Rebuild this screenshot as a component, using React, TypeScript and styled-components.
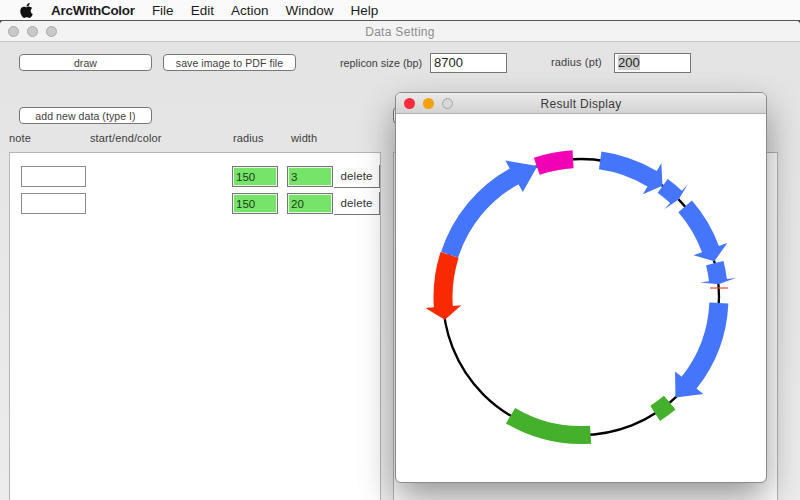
import styled, { createGlobalStyle } from 'styled-components';
import { FaApple } from 'react-icons/fa';

const GlobalStyle = createGlobalStyle`
  html, body {
    margin: 0;
    padding: 0;
    background: #e8e8e8;
  }
  * {
    box-sizing: border-box;
  }
`;

const FONT = '"Liberation Sans", Arial, sans-serif';
const CX = 185;
const CY = 183;
const R = 138;

type Feature = {
  color: string;
  from: number;
  to: number;
  width: number;
  head?: { base: number; half: number };
};

const features: Feature[] = [
  { color: '#4575fb', from: -72.2, to: -18.4, width: 18, head: { base: -29, half: 18 } },
  { color: '#f92a02', from: -72.2, to: -99.5, width: 19, head: { base: -94, half: 18 } },
  { color: '#f200b4', from: -18.7, to: -3.3, width: 18 },
  { color: '#4575fb', from: 8, to: 36.2, width: 18, head: { base: 31, half: 18 } },
  { color: '#4575fb', from: 36.3, to: 45, width: 17, head: { base: 43.5, half: 17 } },
  { color: '#4575fb', from: 49, to: 75, width: 18, head: { base: 69.7, half: 18 } },
  { color: '#4575fb', from: 75.8, to: 84.7, width: 18, head: { base: 83, half: 18 } },
  { color: '#4575fb', from: 92.5, to: 136.8, width: 19, head: { base: 128.4, half: 18 } },
  { color: '#44b02c', from: 140, to: 147.5, width: 18 },
  { color: '#44b02c', from: 176, to: 210.7, width: 18 },
];

function polar(radius: number, deg: number) {
  const a = (deg * Math.PI) / 180;
  return `${(CX + radius * Math.sin(a)).toFixed(2)} ${(CY - radius * Math.cos(a)).toFixed(2)}`;
}

function featurePath({ from, to, width, head }: Feature) {
  const outer = R + width / 2;
  const inner = R - width / 2;
  const end = head ? head.base : to;
  const sweep = end > from ? 1 : 0;
  const parts = [`M ${polar(outer, from)}`, `A ${outer} ${outer} 0 0 ${sweep} ${polar(outer, end)}`];
  if (head) {
    parts.push(`L ${polar(R + head.half, end)}`, `L ${polar(R, to)}`, `L ${polar(R - head.half, end)}`);
  }
  parts.push(`L ${polar(inner, end)}`, `A ${inner} ${inner} 0 0 ${sweep ? 0 : 1} ${polar(inner, from)}`, 'Z');
  return parts.join(' ');
}

export default function App() {
  return (
    <Desktop>
      <GlobalStyle />
      <MenuBar>
        <AppleMark>
          <FaApple size={17} />
        </AppleMark>
        <MenuItem $bold>ArcWithColor</MenuItem>
        <MenuItem>File</MenuItem>
        <MenuItem>Edit</MenuItem>
        <MenuItem>Action</MenuItem>
        <MenuItem>Window</MenuItem>
        <MenuItem>Help</MenuItem>
      </MenuBar>

      <DataWindow>
        <TitleBar>
          <Lights>
            <Light $color="#c9c9c9" />
            <Light $color="#c9c9c9" />
            <Light $color="#c9c9c9" />
          </Lights>
          <Title>Data Setting</Title>
        </TitleBar>

        <Toolbar>
          <PushButton>draw</PushButton>
          <PushButton>save image to PDF file</PushButton>
          <SizeLabel>replicon size (bp)</SizeLabel>
          <ValueField>8700</ValueField>
          <RadiusLabel>radius (pt)</RadiusLabel>
          <ValueField>
            <Selected>200</Selected>
          </ValueField>
        </Toolbar>

        <AddRow>
          <PushButton>add new data (type I)</PushButton>
          <HiddenButton />
        </AddRow>

        <Headers>
          <NoteHead>note</NoteHead>
          <RangeHead>start/end/color</RangeHead>
          <RadiusHead>radius</RadiusHead>
          <span>width</span>
        </Headers>

        <Panels>
          <ListPanel>
            <DataRow>
              <NoteField />
              <GreenField>150</GreenField>
              <GreenField>3</GreenField>
              <DeleteButton>delete</DeleteButton>
            </DataRow>
            <DataRow>
              <NoteField />
              <GreenField>150</GreenField>
              <GreenField>20</GreenField>
              <DeleteButton>delete</DeleteButton>
            </DataRow>
          </ListPanel>
          <SecondPanel />
        </Panels>
      </DataWindow>

      <ResultWindow>
        <ResultBar>
          <Lights>
            <ResultLight $color="#fa2b3c" />
            <ResultLight $color="#f5a10f" />
            <ResultLight $color="#d8d8d8" $ring />
          </Lights>
          <ResultTitle>Result Display</ResultTitle>
        </ResultBar>
        <ResultBody>
          <svg width="370" height="368" viewBox="0 0 370 368">
            <circle cx={CX} cy={CY} r={R} fill="none" stroke="#000" strokeWidth="2.3" />
            {features.map((f, i) => (
              <path key={i} d={featurePath(f)} fill={f.color} />
            ))}
            <line x1={CX + R - 9} y1="174" x2={CX + R + 9} y2="174" stroke="#e5492f" strokeWidth="1.2" />
          </svg>
        </ResultBody>
      </ResultWindow>
    </Desktop>
  );
}

const Desktop = styled.div`
  position: relative;
  width: 800px;
  height: 500px;
  overflow: hidden;
  display: flex;
  flex-direction: column;
  font-family: ${FONT};
  background: #444;
`;

const MenuBar = styled.div`
  height: 21px;
  flex: none;
  display: flex;
  align-items: center;
  padding-left: 18px;
  background: #fafafa;
  border-bottom: 1px solid #555;
  font-size: 13.5px;
  color: #1c1c1c;
`;

const AppleMark = styled.span`
  width: 33px;
  display: flex;
  color: #111;
`;

const MenuItem = styled.span<{ $bold?: boolean }>`
  margin-right: 17px;
  font-weight: ${(p) => (p.$bold ? 700 : 400)};
  letter-spacing: ${(p) => (p.$bold ? '-0.25px' : '0')};
`;

const DataWindow = styled.div`
  flex: 1;
  display: flex;
  flex-direction: column;
  min-height: 0;
  border-radius: 4px 4px 0 0;
  background: linear-gradient(#e3e3e3, #ececec);
  font-size: 11px;
  letter-spacing: 0.12px;
  color: #3d3d3d;
`;

const TitleBar = styled.div`
  height: 21px;
  flex: none;
  display: flex;
  align-items: center;
  justify-content: center;
  position: relative;
  padding-top: 1px;
  border-radius: 4px 4px 0 0;
  background: #f3f3f3;
  border-bottom: 1px solid #c6c6c6;
`;

const Lights = styled.div`
  position: absolute;
  left: 8px;
  top: 5px;
  display: flex;
  gap: 8px;
`;

const Light = styled.i<{ $color: string }>`
  width: 11px;
  height: 11px;
  border-radius: 50%;
  background: ${(p) => p.$color};
  border: 1px solid #a9a9a9;
`;

const Title = styled.span`
  font-size: 12px;
  letter-spacing: 0.3px;
  color: #8d8d8d;
`;

const Toolbar = styled.div`
  height: 33px;
  margin-top: 4px;
  flex: none;
  display: flex;
  align-items: center;
  padding-left: 19px;
`;

const PushButton = styled.button`
  width: 133px;
  height: 17px;
  margin-right: 11px;
  padding: 0;
  flex: none;
  background: #fff;
  border: 1px solid #777;
  border-radius: 4px;
  font: inherit;
  font-size: 10.5px;
  letter-spacing: 0.08px;
  color: #3d3d3d;
`;

const SizeLabel = styled.span`
  margin-left: 33px;
  width: 90px;
  flex: none;
  font-size: 10.8px;
  letter-spacing: 0;
  white-space: nowrap;
`;

const RadiusLabel = styled.span`
  margin-left: 44px;
  width: 63px;
  flex: none;
  white-space: nowrap;
  position: relative;
  top: -1px;
`;

const ValueField = styled.div`
  width: 77px;
  height: 20px;
  flex: none;
  display: flex;
  align-items: center;
  padding-left: 3px;
  background: #fff;
  border: 1px solid #777;
  font-size: 13px;
  letter-spacing: 0;
  color: #222;
`;

const Selected = styled.span`
  background: #cfcfcf;
`;

const AddRow = styled.div`
  height: 17px;
  margin-top: 28px;
  flex: none;
  display: flex;
  padding-left: 19px;
`;

const HiddenButton = styled.div`
  width: 133px;
  height: 17px;
  margin-left: 230px;
  background: #fff;
  border: 1px solid #777;
  border-radius: 4px;
`;

const Headers = styled.div`
  height: 14px;
  margin-top: 7px;
  flex: none;
  display: flex;
  align-items: center;
  padding-left: 9px;
`;

const NoteHead = styled.span`
  width: 81px;
`;

const RangeHead = styled.span`
  width: 143px;
`;

const RadiusHead = styled.span`
  width: 58px;
`;

const Panels = styled.div`
  flex: 1;
  margin-top: 7px;
  display: flex;
  padding-left: 9px;
  min-height: 0;
`;

const ListPanel = styled.div`
  width: 372px;
  flex: none;
  display: flex;
  flex-direction: column;
  gap: 4px;
  padding: 12px 0 0 11px;
  background: #fff;
  border: 1px solid #b5b5b5;
  border-bottom: 0;
`;

const SecondPanel = styled.div`
  width: 385px;
  margin-left: 12px;
  flex: none;
  background: #fff;
  border: 1px solid #b5b5b5;
  border-bottom: 0;
`;

const DataRow = styled.div`
  height: 23px;
  display: flex;
  align-items: center;
`;

const NoteField = styled.div`
  width: 65px;
  height: 21px;
  margin-right: 146px;
  background: #fff;
  border: 1px solid #8b8b8b;
`;

const GreenField = styled.div`
  width: 46px;
  height: 21px;
  margin-right: 9px;
  display: flex;
  align-items: center;
  padding: 1px 0 0 3px;
  background: #75e468;
  border: 1px solid #777;
  box-shadow: inset 0 0 0 1px #e4f7e0;
  font-size: 11.5px;
  letter-spacing: 0;
  color: #1f3a1c;

  & + & {
    margin-right: 1px;
  }
`;

const DeleteButton = styled.button`
  width: 46px;
  height: 23px;
  padding: 0;
  background: #fff;
  border: 0;
  border-right: 1px solid #777;
  border-bottom: 1px solid #777;
  font: inherit;
  font-size: 11.5px;
  letter-spacing: 0.1px;
  color: #333;
`;

const ResultWindow = styled.div`
  position: absolute;
  left: 396px;
  top: 93px;
  width: 370px;
  height: 389px;
  display: flex;
  flex-direction: column;
  border-radius: 5px;
  background: #fff;
  outline: 1px solid #8a8a8a;
  box-shadow: 0 16px 36px rgba(0, 0, 0, 0.42);
`;

const ResultBar = styled.div`
  height: 21px;
  flex: none;
  display: flex;
  align-items: center;
  justify-content: center;
  position: relative;
  padding-top: 1px;
  border-radius: 5px 5px 0 0;
  background: linear-gradient(#eaeaea, #d3d3d3);
  border-bottom: 1px solid #b0b0b0;
`;

const ResultLight = styled.i<{ $color: string; $ring?: boolean }>`
  width: 11px;
  height: 11px;
  border-radius: 50%;
  background: ${(p) => p.$color};
  border: ${(p) => (p.$ring ? '1px solid #a5a5a5' : '0')};
`;

const ResultTitle = styled.span`
  font-size: 12px;
  letter-spacing: 0.3px;
  color: #3a3a3a;
`;

const ResultBody = styled.div`
  flex: 1;
  display: flex;
  border-radius: 0 0 5px 5px;
  background: #fff;
`;
